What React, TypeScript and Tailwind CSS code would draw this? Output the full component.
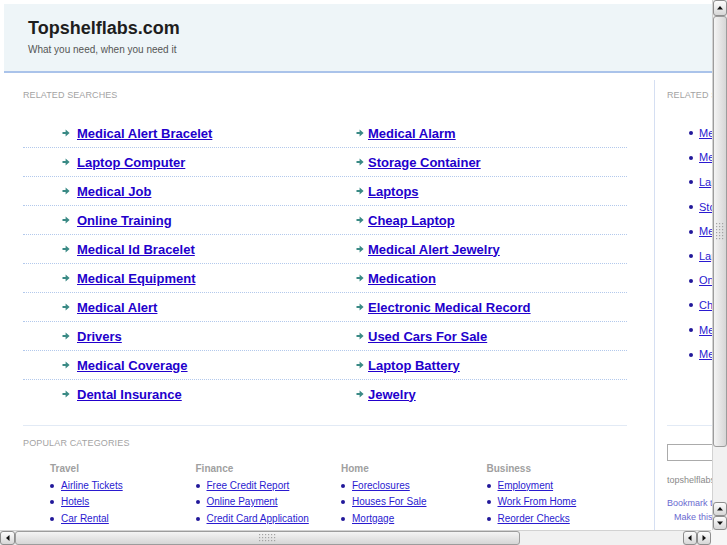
import React from "react";

const leftCol = [
  "Medical Alert Bracelet",
  "Laptop Computer",
  "Medical Job",
  "Online Training",
  "Medical Id Bracelet",
  "Medical Equipment",
  "Medical Alert",
  "Drivers",
  "Medical Coverage",
  "Dental Insurance",
];
const rightCol = [
  "Medical Alarm",
  "Storage Container",
  "Laptops",
  "Cheap Laptop",
  "Medical Alert Jewelry",
  "Medication",
  "Electronic Medical Record",
  "Used Cars For Sale",
  "Laptop Battery",
  "Jewelry",
];
const sideLinks = [
  "Medical Alert Bracelet",
  "Medical Alarm",
  "Laptop Computer",
  "Storage Container",
  "Medical Job",
  "Laptops",
  "Online Training",
  "Cheap Laptop",
  "Medical Id Bracelet",
  "Medical Alert Jewelry",
];
const categories = [
  { title: "Travel", links: ["Airline Tickets", "Hotels", "Car Rental"] },
  { title: "Finance", links: ["Free Credit Report", "Online Payment", "Credit Card Application"] },
  { title: "Home", links: ["Foreclosures", "Houses For Sale", "Mortgage"] },
  { title: "Business", links: ["Employment", "Work From Home", "Reorder Checks"] },
];

function Arrow() {
  return (
    <svg width="8" height="8" viewBox="0 0 8 8" className="shrink-0">
      <path d="M0.5 2.9H3.6V0.6L7.6 4L3.6 7.4V5.1H0.5Z" fill="#3a8a85" />
    </svg>
  );
}

function Bullet() {
  return <span className="inline-block w-[4px] h-[4px] rounded-full bg-[#22189a] shrink-0" />;
}

function Tri({ dir }: { dir: "up" | "down" | "left" | "right" }) {
  const d =
    dir === "up"
      ? "M1 5.5L4 2L7 5.5Z"
      : dir === "down"
      ? "M1 2.5L4 6L7 2.5Z"
      : dir === "left"
      ? "M5.5 1L2 4L5.5 7Z"
      : "M2.5 1L6 4L2.5 7Z";
  return (
    <svg width="8" height="8" viewBox="0 0 8 8">
      <path d={d} fill="#111" />
    </svg>
  );
}

function Btn({ dir, className }: { dir: "up" | "down" | "left" | "right"; className: string }) {
  return (
    <div
      className={
        "flex items-center justify-center rounded-[3px] border border-[#8e8e8e] bg-gradient-to-b from-[#fdfdfd] to-[#d7d7d7] shrink-0 " +
        className
      }
    >
      <Tri dir={dir} />
    </div>
  );
}

function Grip({ vertical }: { vertical?: boolean }) {
  const dots: React.ReactNode[] = [];
  const cols = vertical ? 3 : 6;
  const rows = vertical ? 6 : 3;
  for (let r = 0; r < rows; r++)
    for (let c = 0; c < cols; c++)
      dots.push(<rect key={r + "-" + c} x={c * 3} y={r * 3} width="1.2" height="1.2" fill="#a3a3a3" />);
  return (
    <svg width={cols * 3} height={rows * 3}>
      {dots}
    </svg>
  );
}

export default function App() {
  return (
    <div className="w-[727px] h-[545px] overflow-hidden bg-white font-['Liberation_Sans',Arial,sans-serif] flex flex-col">
      <div className="flex h-[530px]">
        {/* viewport */}
        <div className="w-[712px] h-[530px] overflow-hidden">
          <div className="w-[942px] pt-[4px] px-[4px]">
            {/* header */}
            <div className="h-[69px] border-b-2 border-[#aac3ea] bg-[#eef5f8] pl-[24px] pt-[13px]">
              <div className="text-[18px] leading-[22px] font-bold text-[#1e1e1e]">Topshelflabs.com</div>
              <div className="mt-[4px] text-[10px] leading-[13px] text-[#555]">What you need, when you need it</div>
            </div>

            <div className="flex mt-[7px]">
              {/* main column */}
              <div className="w-[651px] h-[460px] border-r border-[#d5dff2] pl-[19px] pt-[9.5px]">
                <div className="text-[9px] leading-[11px] tracking-[0.1px] text-[#a3a3a3]">RELATED SEARCHES</div>
                <div className="mt-[18.5px] w-[604px]">
                  {leftCol.map((l, i) => (
                    <div
                      key={l}
                      className={
                        "flex h-[29px] pt-[6.5px] " +
                        (i < leftCol.length - 1 ? "border-b border-dotted border-[#b3c9ec]" : "")
                      }
                    >
                      <div className="w-[293px] pl-[39px] flex items-center gap-[7px] h-[15px]">
                        <Arrow />
                        <a className="text-[13px] leading-[15px] font-bold text-[#2200cc] underline">{l}</a>
                      </div>
                      <div className="pl-[40px] flex items-center gap-[4px] h-[15px]">
                        <Arrow />
                        <a className="text-[13px] leading-[15px] font-bold text-[#2200cc] underline">{rightCol[i]}</a>
                      </div>
                    </div>
                  ))}
                </div>
                <div className="mt-[16px] w-[604px] border-t border-[#e2eaf5]" />
                <div className="mt-[11.5px] text-[9px] leading-[11px] tracking-[0.15px] text-[#a3a3a3]">
                  POPULAR CATEGORIES
                </div>
                <div className="flex pl-[27px] mt-[14px]">
                  {categories.map((c) => (
                    <div key={c.title} className="w-[145.5px]">
                      <div className="text-[10px] leading-[12px] font-bold text-[#a0a0a0]">{c.title}</div>
                      <div className="mt-[2.75px]">
                        {c.links.map((l) => (
                          <div key={l} className="flex items-center gap-[7px] h-[16.5px]">
                            <Bullet />
                            <a className="text-[10px] leading-[12px] text-[#2a1ad0] underline whitespace-nowrap">{l}</a>
                          </div>
                        ))}
                      </div>
                    </div>
                  ))}
                </div>
              </div>

              {/* sidebar */}
              <div className="w-[280px] pl-[12px] pt-[9.5px]">
                <div className="text-[9px] leading-[11px] tracking-[0.1px] text-[#a3a3a3]">RELATED SEARCHES</div>
                <div className="mt-[20.5px]">
                  {sideLinks.map((l) => (
                    <div key={l} className="flex items-center gap-[6px] h-[24.6px] pl-[22px]">
                      <Bullet />
                      <a className="text-[11px] leading-[13px] text-[#2a1ad0] underline whitespace-nowrap">{l}</a>
                    </div>
                  ))}
                </div>
                <div className="mt-[58px] w-[250px] border-t border-[#e2eaf5]" />
                <div className="mt-[18px] w-[160px] h-[17px] border border-[#ababab] bg-white" />
                <div className="mt-[14.5px] text-[9px] leading-[11px] text-[#8a8a8a]">topshelflabs.com</div>
                <div className="mt-[12px] text-[9px] leading-[11px] text-[#6a6ad0]">Bookmark this page</div>
                <div className="mt-[3px] pl-[7px] text-[9px] leading-[11px] text-[#6a6ad0]">Make this your homepage</div>
              </div>
            </div>
          </div>
        </div>

        {/* vertical scrollbar */}
        <div className="w-[15px] h-[530px] flex flex-col bg-[#ebebeb] border-l border-[#d2d2d2]">
          <Btn dir="up" className="h-[16px] w-[14px]" />
          <div className="h-[431px] w-[14px] rounded-[3px] border border-[#9c9c9c] bg-gradient-to-r from-[#f4f4f4] to-[#d6d6d6] flex items-center justify-center">
            <Grip vertical />
          </div>
          <div className="flex-1 bg-[#f1f1f1]" />
          <Btn dir="up" className="h-[14px] w-[14px]" />
          <Btn dir="down" className="h-[14px] w-[14px]" />
        </div>
      </div>

      {/* horizontal scrollbar */}
      <div className="flex h-[15px]">
        <div className="flex w-[711px] h-[15px] bg-[#ebebeb] border-t border-[#d2d2d2]">
          <Btn dir="left" className="w-[15px] h-[14px]" />
          <div className="w-[505px] h-[14px] rounded-[3px] border border-[#9c9c9c] bg-gradient-to-b from-[#f4f4f4] to-[#d6d6d6] flex items-center justify-center">
            <Grip />
          </div>
          <div className="flex-1 bg-[#f1f1f1]" />
          <Btn dir="left" className="w-[14px] h-[14px]" />
          <Btn dir="right" className="w-[14px] h-[14px]" />
        </div>
        <div className="w-[16px] h-[15px] bg-[#f6f6f6]" />
      </div>
    </div>
  );
}
